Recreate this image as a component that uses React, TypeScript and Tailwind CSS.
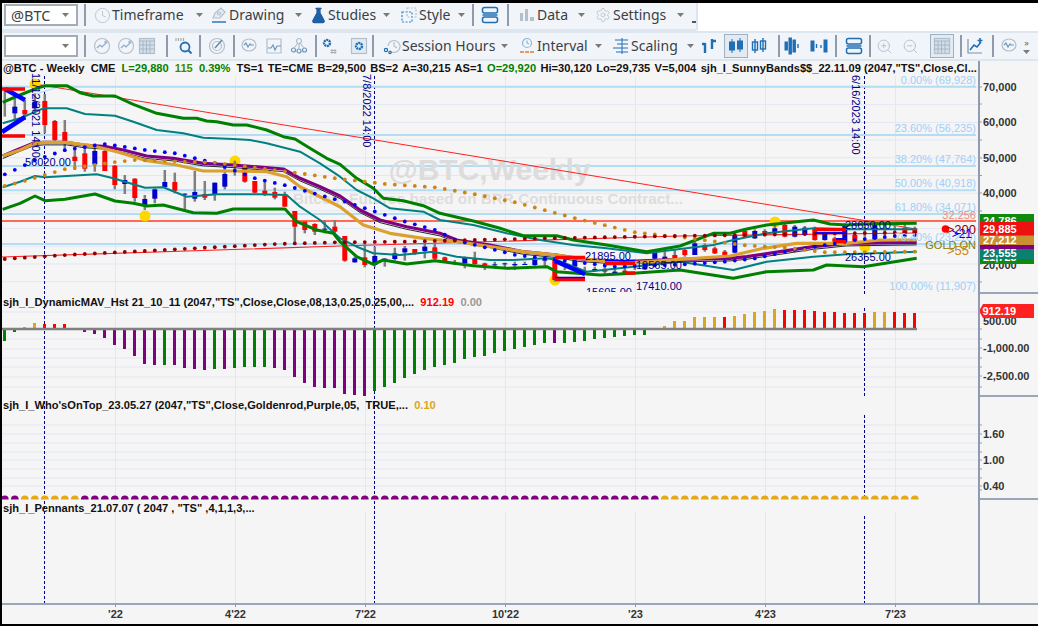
import type { ReactNode } from 'react'
import { Clock, FlaskConical, Settings, ZoomIn, ZoomOut } from 'lucide-react'

// toolbar bits
const GRAY = '#b3bfcb'
const BLUE = '#1f6fb5'

function Caret() {
  return (
    <svg width="7" height="4" viewBox="0 0 7 4" className="shrink-0">
      <path d="M0 0h7L3.5 4z" fill="#7b7b7b" />
    </svg>
  )
}

function Sep({ className = '' }: { className?: string }) {
  return <div className={`w-[2px] h-[22px] bg-[#8f9bab] shrink-0 ${className}`} />
}

function Ico({ children, className = '' }: { children: ReactNode; className?: string }) {
  return (
    <svg width="18" height="18" viewBox="0 0 18 18" fill="none" stroke={GRAY} strokeWidth="1.2" className={`shrink-0 ${className}`}>
      {children}
    </svg>
  )
}

function Menu({ w, icon, label, className = '' }: { w: string; icon: ReactNode; label: string; className?: string }) {
  return (
    <div className={`flex items-center shrink-0 ${w} ${className}`}>
      <span className="w-[20px] flex justify-center shrink-0">{icon}</span>
      <span className="text-[14px] text-[#3a3f45] leading-none">{label}</span>
      <span className="ml-auto"><Caret /></span>
    </div>
  )
}

function Combo({ text }: { text?: string }) {
  return (
    <div className="w-[74px] h-[22px] bg-white border-2 border-[#a4acb4] flex items-center shrink-0 pl-[5px] pr-[7px]">
      <span className="text-[14.5px] text-[#3a3f45] leading-none">{text}</span>
      <span className="ml-auto"><Caret /></span>
    </div>
  )
}

const StackIcon = () => (
  <Ico>
    <g stroke={BLUE} strokeWidth="1.5">
      <rect x="1.5" y="1.5" width="15" height="5.5" rx="2" />
      <rect x="1.5" y="11" width="15" height="5.5" rx="2" />
      <path d="M1.5 9h15" />
    </g>
  </Ico>
)

const DrawIcon = () => (
  <Ico>
    <path d="M3 12l2-5 6-5 4 4-5 6z" fill="#e6ebf1" />
    <circle cx="9" cy="7.5" r="1.5" />
    <path d="M2 16h14" stroke={BLUE} strokeWidth="1.4" />
  </Ico>
)

const StyleIcon = () => (
  <Ico>
    <rect x="2" y="6" width="10" height="10" stroke="#2f86c9" strokeDasharray="2 1.5" />
    <rect x="7" y="2" width="9" height="9" strokeDasharray="2 1.5" />
  </Ico>
)

const DataIcon = () => (
  <Ico>
    <g fill={GRAY} stroke="none">
      <rect x="2" y="7" width="3" height="8" />
      <rect x="7" y="3" width="3" height="12" />
      <rect x="12" y="11" width="4" height="4" />
    </g>
  </Ico>
)

const ChartCircle = () => (
  <Ico>
    <circle cx="9" cy="9" r="7.5" />
    <path d="M4 11l3-3 2 2 5-5" stroke="#8fabc6" />
    <circle cx="13" cy="5" r="1.2" fill="#8fabc6" />
  </Ico>
)

const GridIcon = () => (
  <Ico>
    <rect x="1.5" y="1.5" width="15" height="15" fill="#d3dee8" />
    <path d="M1.5 4h15M5 4v12.5M8.5 4v12.5M12 4v12.5M1.5 8h15M1.5 12h15" stroke="#9db0c1" strokeWidth="0.8" />
  </Ico>
)

const SearchDots = () => (
  <Ico>
    <path d="M1 1v3M3.5 1v3M6 1v3M8.5 1v3" stroke="#a8a8a8" />
    <circle cx="10" cy="10" r="4.5" stroke={BLUE} strokeWidth="1.8" />
    <path d="M13.5 13.5l3 3" stroke={BLUE} strokeWidth="2" />
  </Ico>
)

const TargetIcon = () => (
  <Ico>
    <circle cx="9" cy="9" r="7.5" />
    <circle cx="9" cy="9" r="4.5" />
    <path d="M7 11l7-8" stroke="#5c88b0" strokeWidth="1.5" />
  </Ico>
)

const WaveBubble = () => (
  <Ico>
    <ellipse cx="9" cy="8" rx="7" ry="6" />
    <path d="M4 8l2-2 2 4 2-3 1 1h3" stroke="#6f97bc" />
  </Ico>
)

const WaveBox = () => (
  <Ico>
    <path d="M2 16V2h14v14z" />
    <path d="M3 11h3l2-3 2 5 2-4h4" stroke="#6f97bc" />
  </Ico>
)

const NodesIcon = () => (
  <Ico>
    <circle cx="9" cy="4" r="2.5" />
    <circle cx="3.5" cy="13" r="2" stroke="#6f97bc" />
    <circle cx="9" cy="14" r="2" stroke="#6f97bc" />
    <circle cx="14.5" cy="13" r="2" stroke="#6f97bc" />
    <path d="M8 6l-4 5M9 6.5V12M10 6l4 5" />
  </Ico>
)

const GearHash = () => (
  <Ico>
    <circle cx="7" cy="6" r="3" stroke={BLUE} strokeWidth="2.4" strokeDasharray="2 0.6" />
    <path d="M12 12v5M15 12v5M10.5 13.5h6M10.5 15.5h6" stroke="#a8a8a8" strokeWidth="0.9" />
  </Ico>
)

const GearBox = () => (
  <Ico>
    <rect x="1.5" y="1.5" width="15" height="15" fill="#e3eaf1" />
    <circle cx="9" cy="9" r="3" stroke={BLUE} strokeWidth="2.4" strokeDasharray="2 0.6" />
  </Ico>
)

const SessionIcon = () => (
  <Ico>
    <path d="M5 9a6 6 0 1 1 2 5" />
    <path d="M11 5v4l3 2" />
    <circle cx="3" cy="13" r="1.6" stroke={BLUE} />
    <circle cx="7" cy="15.5" r="1.2" stroke={BLUE} />
  </Ico>
)

const IntervalIcon = () => (
  <Ico>
    <circle cx="9" cy="6" r="4.5" stroke="#8db5d6" />
    <path d="M9 3.5V6l2 1" stroke="#8db5d6" />
    <path d="M2 15h4M7 15h4M12 15h4" stroke="#e07b39" strokeWidth="1.5" />
  </Ico>
)

const ScalingIcon = () => (
  <Ico>
    <path d="M10 1v16M3 3h13M5 7h11M1 11h15M4 15h12" stroke={BLUE} strokeWidth="1" />
  </Ico>
)

const BarsUp = () => (
  <Ico>
    <g stroke={BLUE} strokeWidth="2.4">
      <path d="M5 6v10M2 7h3M12 2v10M12 4h4" />
    </g>
  </Ico>
)

const Candles = ({ hollow }: { hollow?: boolean }) => (
  <Ico>
    <g stroke={BLUE} fill={hollow ? 'none' : BLUE} strokeWidth={hollow ? 1.4 : 1}>
      <path d="M5 2v14M13 1v14" />
      <rect x="2.5" y="5" width="5" height="8" />
      <rect x="10.5" y="4" width="5" height="8" />
    </g>
  </Ico>
)

const Spread = ({ wide }: { wide?: boolean }) => (
  <Ico>
    <g stroke={BLUE} fill={BLUE} strokeWidth="1">
      {wide ? (
        <>
          <rect x="1" y="4" width="3" height="10" />
          <rect x="14" y="3" width="3" height="12" />
          <path d="M6.5 7v4M11 8v3" strokeWidth="1.4" />
        </>
      ) : (
        <>
          <rect x="2" y="5" width="2.4" height="8" />
          <rect x="6" y="1" width="2.4" height="16" />
          <rect x="10" y="3" width="2.4" height="12" />
          <path d="M15 7v4" strokeWidth="1.4" />
        </>
      )}
    </g>
  </Ico>
)

const AddChart = () => (
  <Ico>
    <path d="M2 2v14h14" stroke="#7f93a6" />
    <path d="M4 13l4-5 3 2 4-5" stroke={BLUE} strokeWidth="1.6" />
    <path d="M14 1v5M11.5 3.5h5" stroke={BLUE} strokeWidth="1.6" />
  </Ico>
)

// ---- chart data, taken from the picture (3x crop coords; one crop = 340px wide) ----
type P = [number, number]
const page = (pts: P[], off: number): P[] => pts.map(([x, y]) => [x / 3 + off, 70 + y / 3])
const series = (a: P[], b: P[], c: P[]): P[] => [...page(a, 0), ...page(b, 340), ...page(c, 680)]
const barX = (i: number) => 4.8 + 10 * i
const toPoints = (pts: P[]) => pts.map(([x, y]) => `${x.toFixed(1)},${y.toFixed(1)}`).join(' ')

const interp = (pts: P[], x: number) => {
  if (x <= pts[0][0]) return pts[0][1]
  for (let k = 1; k < pts.length; k++) {
    if (x <= pts[k][0]) {
      const [x0, y0] = pts[k - 1]
      const [x1, y1] = pts[k]
      return y0 + ((y1 - y0) * (x - x0)) / (x1 - x0)
    }
  }
  return pts[pts.length - 1][1]
}

const greenUp = series(
  [[8, 97], [60, 75], [110, 55], [135, 47], [200, 47], [240, 68], [280, 78], [345, 78], [400, 103], [470, 130], [550, 145], [590, 145], [620, 153], [650, 155], [700, 165], [740, 165], [800, 180], [850, 200], [885, 207], [930, 235], [980, 265]],
  [[0, 283], [50, 325], [100, 355], [130, 385], [190, 392], [250, 407], [300, 430], [400, 453], [480, 475], [550, 497], [650, 497], [700, 510], [800, 525], [920, 545]],
  [[0, 528], [100, 490], [150, 490], [200, 477], [260, 465], [350, 455], [400, 450], [450, 462], [500, 465], [550, 462], [710, 460]],
)
const tealUp = series(
  [[8, 160], [60, 145], [130, 115], [200, 115], [255, 132], [345, 137], [400, 155], [470, 180], [550, 190], [610, 203], [700, 207], [750, 210], [800, 220], [900, 245], [960, 280]],
  [[0, 320], [50, 360], [100, 385], [150, 415], [250, 425], [300, 450], [400, 465], [500, 490], [600, 510], [700, 525], [800, 535], [920, 550]],
  [[0, 537], [100, 525], [160, 510], [260, 490], [400, 475], [500, 478], [710, 478]],
)
const purple = series(
  [[8, 258], [50, 240], [100, 220], [130, 217], [200, 217], [250, 225], [320, 230], [370, 240], [440, 258], [520, 265], [610, 280], [700, 285], [850, 297], [900, 325], [960, 350]],
  [[0, 378], [60, 420], [120, 450], [200, 470], [300, 490], [350, 510], [450, 525], [550, 545], [650, 555], [720, 567], [850, 575]],
  [[0, 568], [150, 565], [200, 560], [300, 545], [400, 530], [500, 520], [710, 517]],
)
const gold = series(
  [[8, 258], [60, 240], [100, 222], [130, 217], [200, 217], [280, 228], [350, 245], [440, 272], [530, 285], [610, 303], [700, 303], [800, 305], [860, 320], [900, 350], [960, 380]],
  [[0, 410], [70, 465], [150, 490], [250, 505], [350, 515], [450, 530], [550, 545], [650, 555], [720, 565], [850, 580]],
  [[0, 568], [150, 558], [250, 535], [350, 520], [500, 520], [600, 510], [710, 510]],
)
const tealLow = series(
  [[8, 352], [60, 335], [105, 318], [135, 322], [200, 318], [290, 313], [340, 325], [435, 353], [490, 352], [560, 380], [650, 373], [780, 373], [860, 375], [900, 410], [960, 450]],
  [[0, 505], [50, 530], [100, 550], [180, 555], [280, 545], [350, 560], [450, 570], [520, 570], [620, 565], [650, 570], [740, 605], [880, 590]],
  [[0, 575], [160, 600], [260, 575], [400, 560], [500, 553], [710, 545]],
)
const greenLow = series(
  [[8, 418], [60, 400], [105, 378], [135, 392], [195, 388], [285, 372], [345, 393], [400, 400], [440, 408], [490, 405], [580, 428], [650, 430], [700, 417], [855, 417], [890, 455], [950, 480], [1000, 490]],
  [[0, 515], [50, 560], [100, 583], [130, 570], [200, 582], [285, 572], [400, 587], [500, 595], [620, 590], [650, 605], [780, 615], [880, 610]],
  [[0, 600], [160, 625], [260, 605], [400, 600], [440, 585], [550, 590], [710, 565]],
)

const blueDots = series(
  [[16, 313], [106, 270], [196, 240], [316, 222], [436, 240], [526, 250], [646, 280], [766, 325], [856, 346], [1006, 388]],
  [[16, 395], [106, 425], [196, 455], [286, 480], [346, 510], [526, 555], [616, 565], [826, 590]],
  [[16, 583], [136, 575], [226, 565], [316, 545], [526, 510], [646, 498], [706, 495]],
)
const orangeDots = series(
  [[16, 348], [76, 332], [196, 297], [346, 276], [406, 270], [646, 278], [886, 308], [1006, 325]],
  [[16, 328], [136, 342], [286, 352], [406, 373], [526, 397], [706, 445], [886, 487], [1006, 500]],
  [[16, 503], [196, 526], [316, 533], [436, 547], [706, 545]],
)
const redDots = series(
  [[16, 567], [196, 555], [526, 538], [826, 522], [1006, 517]],
  [[196, 515], [616, 505], [1006, 498]],
  [[706, 487]],
)

// wick top, wick bottom, body top, body bottom, colour
type C = [number, number, number, number, 'r' | 'b']
const candles: C[] = [
  [60, 140, 0, 0, 'b'], [80, 150, 110, 130, 'b'], [90, 150, 120, 133, 'r'], [70, 130, 95, 115, 'b'], [72, 190, 93, 165, 'r'],
  [150, 220, 153, 210, 'r'], [150, 245, 186, 215, 'r'], [230, 300, 260, 273, 'r'], [230, 305, 250, 296, 'r'], [220, 305, 243, 283, 'b'],
  [220, 303, 243, 303, 'r'], [285, 358, 287, 345, 'r'], [315, 372, 330, 342, 'b'], [325, 395, 326, 384, 'r'], [375, 420, 387, 405, 'b'],
  [355, 400, 358, 386, 'b'], [300, 355, 336, 351, 'b'], [308, 370, 336, 362, 'r'], [370, 425, 371, 374, 'b'], [303, 395, 366, 386, 'b'],
  [333, 390, 372, 383, 'r'], [338, 392, 338, 375, 'b'], [290, 358, 312, 350, 'b'], [272, 317, 0, 0, 'b'], [290, 338, 292, 335, 'r'],
  [333, 370, 333, 368, 'r'], [330, 378, 362, 375, 'r'], [353, 388, 366, 383, 'r'], [365, 410, 378, 410, 'r'], [423, 522, 423, 470, 'r'],
  [455, 490, 455, 480, 'r'], [460, 495, 462, 485, 'r'], [450, 490, 476, 478, 'b'], [450, 490, 470, 485, 'r'],
  [498, 575, 498, 572, 'r'], [560, 578, 565, 577, 'b'], [520, 592, 562, 585, 'r'], [530, 590, 558, 585, 'b'], [565, 590, 566, 570, 'b'],
  [533, 572, 550, 567, 'b'], [528, 572, 535, 547, 'b'], [537, 555, 537, 550, 'r'], [520, 565, 530, 543, 'b'], [520, 570, 532, 566, 'r'],
  [560, 575, 562, 573, 'r'], [570, 585, 0, 0, 'b'], [560, 595, 562, 580, 'b'], [545, 585, 567, 582, 'r'], [578, 600, 580, 586, 'r'],
  [575, 595, 583, 586, 'b'], [578, 592, 580, 583, 'b'], [575, 600, 582, 586, 'b'], [575, 585, 582, 585, 'b'], [565, 590, 570, 585, 'b'],
  [565, 590, 566, 572, 'b'], [565, 635, 565, 630, 'r'], [570, 600, 0, 0, 'b'], [568, 600, 572, 590, 'b'], [590, 610, 0, 0, 'b'],
  [590, 605, 597, 603, 'b'], [580, 610, 600, 605, 'r'], [595, 615, 605, 610, 'b'], [590, 610, 602, 612, 'r'], [590, 600, 0, 0, 'b'],
  [575, 600, 578, 598, 'b'], [548, 580, 548, 566, 'b'], [545, 585, 560, 575, 'b'], [540, 575, 555, 565, 'r'],
  [535, 560, 540, 555, 'r'], [515, 555, 520, 555, 'b'], [520, 545, 525, 540, 'r'], [530, 552, 535, 550, 'r'], [540, 560, 545, 558, 'r'],
  [490, 550, 497, 548, 'b'], [475, 502, 482, 500, 'r'], [478, 507, 483, 505, 'b'], [478, 497, 483, 495, 'r'], [460, 492, 475, 490, 'b'],
  [460, 502, 465, 500, 'r'], [465, 502, 470, 500, 'b'], [468, 497, 473, 495, 'b'], [470, 512, 475, 510, 'r'], [488, 512, 492, 510, 'b'],
  [500, 522, 505, 520, 'r'], [460, 522, 465, 520, 'b'], [490, 517, 495, 515, 'r'], [462, 517, 0, 0, 'b'], [460, 512, 465, 510, 'b'],
  [460, 502, 0, 0, 'b'], [458, 497, 0, 0, 'b'], [458, 492, 473, 490, 'r'], [470, 492, 475, 490, 'r'],
]

const G = '#008000', M = '#800080', Y = '#daa520', R = '#ff0000'
// histogram height, colour (index is bar number)
const hist: [number, string][] = [
  [-12, G], [-3, G], [2, Y], [6, Y], [5, R], [5, R], [5, R], [1, R], [-3, M], [-5, M], [-9, M], [-16, M], [-20, M], [-27, M], [-35, M], [-36, M],
  [-36, G], [-36, M], [-39, M], [-40, M], [-41, M], [-40, G], [-40, M], [-39, G], [-38, G], [-38, G], [-38, G], [-39, M], [-41, M], [-48, M],
  [-54, M], [-58, M], [-59, M], [-59, M], [-65, M], [-66, M], [-67, M], [-62, G], [-58, G], [-54, G], [-49, G], [-45, G], [-41, G], [-38, G],
  [-36, G], [-34, G], [-30, G], [-28, G], [-27, G], [-24, G], [-22, G], [-20, G], [-18, G], [-16, G], [-14, G], [-14, M], [-14, G], [-13, G],
  [-12, G], [-10, G], [-9, G], [-8, G], [-7, G], [-6, G], [-6, G], [-1, G], [3, Y], [8, Y], [8, Y], [12, Y], [12, Y], [12, Y], [12, R], [13, Y],
  [15, Y], [17, Y], [18, Y], [20, Y], [19, R], [19, R], [19, R], [18, R], [17, R], [17, R], [16, R], [16, R], [16, R], [17, Y], [17, Y], [17, R],
  [16, R], [16, R],
]

const HGRID = [
  ...Array.from({ length: 12 }, (_, i) => 87 + 17.7 * i),
  312, 329, 339, 349, 358, 367, 377, 387, 425, 434, 443, 452, 460, 469, 478, 486,
]
const VGRID = [115.5, 235.5, 365.5, 505.5, 635.5, 765.5, 895.5]
const FIB = [86.7, 135, 166, 190.3, 214, 244]
const AXIS_TICKS = [87, 104, 122, 140, 158, 175.5, 193, 211, 246, 264, 282, 312, 329, 339, 348, 358, 367, 376, 387, 425, 434, 443, 452, 460, 469, 478, 486, 490]

function Chart() {
  const t: React.SVGProps<SVGTextElement> = { fontFamily: '"Liberation Sans", Arial, sans-serif' }
  return (
    <svg width="1036" height="565" viewBox="2 61 1036 565" className="absolute left-0 top-0">
      <defs>
        <clipPath id="price"><rect x="2" y="70" width="976" height="222" /></clipPath>
        <clipPath id="halves"><rect x="2" y="480" width="976" height="19.5" /></clipPath>
      </defs>

      {HGRID.map(y => <line key={y} x1="2" x2="978" y1={y} y2={y} stroke="#e2e7f3" />)}
      {VGRID.map(x => (
        <g key={x} stroke="#e2e7f3">
          <line x1={x} x2={x} y1="76" y2="500" />
          <line x1={x} x2={x} y1="512" y2="607" />
        </g>
      ))}
      {[44.5, 374.5].map(x => <line key={x} x1={x} x2={x} y1="76" y2="603" stroke="#00008b" strokeDasharray="3 2" />)}
      {[[76, 294], [308, 397], [415, 499], [516, 603]].map(([a, b]) => (
        <line key={a} x1="864.5" x2="864.5" y1={a} y2={b} stroke="#00008b" strokeDasharray="3 2" />
      ))}

      <g clipPath="url(#price)">
        {FIB.map(y => <line key={y} x1="2" x2="976" y1={y} y2={y} stroke="#b5dcf5" strokeWidth="2" />)}
        <line x1="36" y1="94" x2="62" y2="86" stroke="#b5dcf5" />
        <text {...t} x="489.5" y="180" fontSize="30" fontWeight="700" fill="#dcdcdc" textAnchor="middle">@BTC,Weekly</text>
        <text {...t} x="488" y="204" fontSize="15.3" fontWeight="700" fill="#dddddd" textAnchor="middle">Bitcoin Futures based on BRR Continuous Contract...</text>
        <line x1="2" x2="976" y1="221" y2="221" stroke="#ff6a58" strokeWidth="2" />
        <polyline points="2,257 340,246 680,236 916,233" fill="none" stroke="#ff2020" strokeWidth="1.2" />
        <line x1="35" y1="84" x2="916" y2="229" stroke="#ff2020" strokeWidth="1" />

        {[[35, 84], [235, 161], [145, 216], [555, 280], [775, 222], [865, 247]].map(([x, y]) => (
          <circle key={x} cx={x} cy={y} r="5.5" fill="#ffd700" />
        ))}

        {candles.map((c, i) => (
          <g key={i}>
            <line x1={barX(i)} x2={barX(i)} y1={70 + c[0] / 3} y2={70 + c[1] / 3} stroke="#808080" strokeWidth="2.5" />
            {c[2] > 0 && (
              <rect x={barX(i) - 2.5} y={70 + c[2] / 3} width="5" height={Math.max(1, (c[3] - c[2]) / 3)} fill={c[4] === 'r' ? '#ff0000' : '#0000cd'} />
            )}
          </g>
        ))}

        <polyline points={toPoints(tealUp)} fill="none" stroke="#008080" strokeWidth="2" strokeLinejoin="round" />
        <polyline points={toPoints(tealLow)} fill="none" stroke="#008080" strokeWidth="2" strokeLinejoin="round" />
        <polyline points={toPoints(greenUp)} fill="none" stroke="#008000" strokeWidth="3" strokeLinejoin="round" />
        <polyline points={toPoints(greenLow)} fill="none" stroke="#008000" strokeWidth="3" strokeLinejoin="round" />
        <polyline points={toPoints(purple)} fill="none" stroke="#800080" strokeWidth="3.2" strokeLinejoin="round" />
        <polyline points={toPoints(purple.map(([x, y]) => [x, y + 2.6] as P))} fill="none" stroke="#111" strokeWidth="0.9" />
        <polyline points={toPoints(gold)} fill="none" stroke="#daa030" strokeWidth="3.2" strokeLinejoin="round" />

        {candles.map((_, i) => (
          <g key={i}>
            <circle cx={barX(i)} cy={interp(blueDots, barX(i))} r="1.9" fill="#0000ff" />
            <circle cx={barX(i)} cy={interp(orangeDots, barX(i))} r="1.9" fill="#cc8510" />
            <circle cx={barX(i)} cy={interp(redDots, barX(i))} r="1.9" fill="#8b0000" />
          </g>
        ))}

        {/* pennants */}
        <g>
          <path d="M5 89l20 11M2 132l23-15" stroke="#0000ff" strokeWidth="4.5" fill="none" />
          <path d="M2 89h23M2 136h23" stroke="#ff0000" strokeWidth="3.5" />
          <path d="M555 261l30 13" stroke="#0000ff" strokeWidth="4.5" />
          <path d="M555 257.5h30M555 279.5h30" stroke="#ff0000" strokeWidth="3.5" />
          <path d="M555 277.5h30" stroke="#0000ff" strokeWidth="1.5" />
          <path d="M605 263.5h30M625 273h10" stroke="#ff0000" strokeWidth="3.5" />
          <path d="M605 260.5h30" stroke="#0000ff" strokeWidth="1.5" />
          <path d="M815 229.5h31M836 241.5h10" stroke="#ff0000" strokeWidth="3.5" />
          <path d="M815 233h31M836 239h10" stroke="#0000ff" strokeWidth="1.8" />
        </g>

        <g fill="#00008b" fontSize="11">
          <text {...t} x="25" y="166">56020.00</text>
          <text {...t} x="585" y="260">21895.00</text>
          <text {...t} x="636" y="269">19565.00</text>
          <text {...t} x="636" y="290">17410.00</text>
          <text {...t} x="586" y="295.5">15605.00</text>
          <text {...t} x="845" y="229">28650.00</text>
          <text {...t} x="845" y="261">26355.00</text>
          <text {...t} transform="translate(32 73) rotate(90)">11/12/2021 14:00</text>
          <text {...t} transform="translate(363 74) rotate(90)">7/8/2022 14:00</text>
          <text {...t} transform="translate(852 75) rotate(90)">6/16/2023 14:00</text>
        </g>

        <g fontSize="11" textAnchor="end" fill="#9fd0f7">
          <text {...t} x="976" y="84">0.00% (69,928)</text>
          <text {...t} x="976" y="132">23.60% (56,235)</text>
          <text {...t} x="976" y="163">38.20% (47,764)</text>
          <text {...t} x="976" y="187">50.00% (40,918)</text>
          <text {...t} x="976" y="211">61.80% (34,071)</text>
          <text {...t} x="976" y="241">76.40% (23,210)</text>
          <text {...t} x="976" y="290">100.00% (11,907)</text>
          <text {...t} x="976" y="219" fill="#f28b7c">32,256</text>
          <circle cx="945.5" cy="229" r="3.8" fill="#ff0000" />
          <text {...t} x="976" y="234" fill="#8b0000" fontSize="13">&gt;200</text>
          <text {...t} x="972" y="238" fill="#0000ff" fontSize="12">&gt;21</text>
          <text {...t} x="976" y="249" fill="#808000">GOLD ON</text>
          <text {...t} x="969" y="255" fill="#cc8510" fontSize="13">&gt;55</text>
        </g>
      </g>

      {/* histogram */}
      {hist.map(([h, c], i) => (
        <rect key={i} x={3 + 10 * i} y={h > 0 ? 329 - h : 329} width="3" height={Math.abs(h)} fill={c} />
      ))}
      <line x1="2" x2="917" y1="329" y2="329" stroke="#808080" strokeWidth="2.6" />

      {/* who's on top dots */}
      <g clipPath="url(#halves)">
        {hist.map((_, i) => (
          <circle key={i} cx={4.8 + 10 * i} cy="499.3" r="3.9" fill={(i >= 2 && i <= 7) || i >= 66 ? '#e6a817' : '#800080'} />
        ))}
      </g>

      {/* right axis */}
      {AXIS_TICKS.map(y => <line key={y} x1="978" x2="982" y1={y} y2={y} stroke="#8f9bb3" />)}
      <g fontSize="11" fontWeight="700" fill="#333">
        <text {...t} x="983" y="91">70,000</text>
        <text {...t} x="983" y="126">60,000</text>
        <text {...t} x="983" y="162">50,000</text>
        <text {...t} x="983" y="197">40,000</text>
        <text {...t} x="983" y="269">20,000</text>
        <text {...t} x="983" y="325">500.00</text>
        <text {...t} x="983" y="352">-1,000.00</text>
        <text {...t} x="983" y="380">-2,500.00</text>
        <text {...t} x="983" y="438">1.60</text>
        <text {...t} x="983" y="464">1.00</text>
        <text {...t} x="983" y="490">0.40</text>
      </g>

      {/* price flags */}
      <g fontSize="11" fontWeight="700" fill="#fff">
        <rect x="979" y="214" width="55" height="8" fill="#0f8a0f" />
        <text {...t} x="983" y="225">24,786</text>
        <rect x="979" y="257" width="55" height="7" fill="#0f8a0f" />
        <text {...t} x="983" y="261">21,723</text>
        <rect x="979" y="249" width="55" height="10" fill="#0a8070" />
        <text {...t} x="983" y="256.5">23,555</text>
        <rect x="979" y="235" width="55" height="10" fill="#c89030" />
        <text {...t} x="983" y="243.5">27,212</text>
        <rect x="979" y="245" width="55" height="4" fill="#800080" />
        <path d="M979 222h55v13.5h-55z" fill="#ee1111" />
        <text {...t} x="983" y="233">29,885</text>
        <path d="M983 304h51v14h-51l-4-7z" fill="#ff2020" />
        <text {...t} x="982.5" y="315">912.19</text>
      </g>

      {/* time axis */}
      {VGRID.map(x => <line key={x} x1={x} x2={x} y1="603" y2="607" stroke="#8f9bb3" />)}
      <g fontSize="11" fontWeight="700" fill="#333" textAnchor="middle">
        {["'22", "4'22", "7'22", "10'22", "'23", "4'23", "7'23"].map((l, i) => (
          <text {...t} key={l} x={VGRID[i]} y="618">{l}</text>
        ))}
      </g>
    </svg>
  )
}

function Legend({ children, className = '' }: { children: ReactNode; className?: string }) {
  return (
    <div className={`relative z-10 h-[15px] w-[976px] overflow-hidden pl-[1px] flex items-center whitespace-pre text-[11.1px] font-bold leading-none text-[#111] ${className}`}>
      {children}
    </div>
  )
}

export default function App() {
  return (
    <div className="w-[1038px] h-[626px] bg-black pt-[3px] pl-[2px] pb-[2px] overflow-hidden flex flex-col font-['Noto_Sans','Liberation_Sans',sans-serif]">
      {/* top menu bar */}
      <div className="h-[28px] bg-white shrink-0">
        <div className="w-[696px] h-[28px] bg-[#f1f5fa] border-b-2 border-r-2 border-[#dde5ef] rounded-br-[3px] flex items-center pl-[2px] pb-[2px]">
          <Combo text="@BTC" />
          <Sep className="ml-[6px]" />
          <Menu w="w-[111px]" className="ml-[6px]" icon={<Clock size={17} color={GRAY} strokeWidth={1.2} />} label="Timeframe" />
          <Menu w="w-[93px]" className="ml-[6px]" icon={<DrawIcon />} label="Drawing" />
          <Menu w="w-[82px]" className="ml-[6px]" icon={<FlaskConical size={17} color="#1f5fa8" fill="#1f5fa8" />} label="Studies" />
          <Menu w="w-[66px]" className="ml-[9px]" icon={<StyleIcon />} label="Style" />
          <Sep className="ml-[7px]" />
          <span className="ml-[7px]"><StackIcon /></span>
          <Sep className="ml-[8px]" />
          <Menu w="w-[68px]" className="ml-[8px]" icon={<DataIcon />} label="Data" />
          <Menu w="w-[91px]" className="ml-[8px]" icon={<Settings size={16} color={GRAY} strokeWidth={1.2} />} label="Settings" />
          <span className="ml-[8px] mt-[14px] w-[5px] h-[2px] bg-[#555]" />
        </div>
      </div>

      {/* second tool bar */}
      <div className="h-[30px] bg-[#f1f5fa] border-y-2 border-[#dde5ef] shrink-0 flex items-center pl-[2px]">
        <Combo />
        <Sep className="ml-[6px]" />
        <span className="ml-[7px]"><ChartCircle /></span>
        <span className="ml-[6px]"><ChartCircle /></span>
        <span className="ml-[3px]"><GridIcon /></span>
        <Sep className="ml-[10px]" />
        <span className="ml-[7px]"><SearchDots /></span>
        <Sep className="ml-[6px]" />
        <span className="ml-[7px]"><TargetIcon /></span>
        <Sep className="ml-[7px]" />
        <span className="ml-[5px]"><WaveBubble /></span>
        <span className="ml-[7px]"><WaveBox /></span>
        <span className="ml-[7px]"><NodesIcon /></span>
        <Sep className="ml-[7px]" />
        <span className="ml-[3px]"><GearHash /></span>
        <span className="ml-[12px]"><GearBox /></span>
        <Sep className="ml-[4px]" />
        <Menu w="w-[126px]" className="ml-[8px]" icon={<SessionIcon />} label="Session Hours" />
        <Menu w="w-[85px]" className="ml-[9px]" icon={<IntervalIcon />} label="Interval" />
        <Menu w="w-[83px]" className="ml-[9px]" icon={<ScalingIcon />} label="Scaling" />
        <span className="ml-[6px]"><BarsUp /></span>
        <span className="ml-[6px] w-[24px] h-[24px] border border-[#9fb0c2] bg-[#e3eaf2] flex items-center justify-center shrink-0"><Candles /></span>
        <span className="ml-[2px]"><Candles hollow /></span>
        <Sep className="ml-[10px]" />
        <span className="ml-[3px]"><Spread /></span>
        <span className="ml-[9px]"><Spread wide /></span>
        <Sep className="ml-[7px]" />
        <span className="ml-[8px]"><StackIcon /></span>
        <Sep className="ml-[6px]" />
        <span className="ml-[5px]"><ZoomIn size={17} color={GRAY} strokeWidth={1.3} /></span>
        <span className="ml-[9px]"><ZoomOut size={17} color={GRAY} strokeWidth={1.3} /></span>
        <span className="ml-[11px] w-[24px] h-[24px] border border-[#9fb0c2] bg-[#e3eaf2] flex items-center justify-center shrink-0"><GridIcon /></span>
        <Sep className="ml-[6px]" />
        <span className="ml-[4px]"><AddChart /></span>
        <Sep className="ml-[8px]" />
        <span className="ml-[6px]"><WaveBubble /></span>
        <span className="ml-[5px] flex flex-col items-center gap-[3px] text-[9px] leading-none text-[#666]">
          <span>»</span>
          <Caret />
        </span>
      </div>

      {/* chart */}
      <div className="relative flex-1 min-h-0 bg-[#f5f5f5] flex flex-col font-['Liberation_Sans',Arial,sans-serif]">
        <Chart />
        <div className="h-[233px] shrink-0 flex flex-col">
          <Legend>
            <span>@BTC - Weekly  CME  </span>
            <span className="text-[#008000]">L=29,880  </span>
            <span className="text-[#3d8a00]">115  </span>
            <span className="text-[#008000]">0.39%  </span>
            <span className="[word-spacing:-0.9px]">TS=1  TE=CME  B=29,500  BS=2  A=30,215  AS=1  </span>
            <span className="text-[#008000] [word-spacing:-0.9px]">O=29,920  </span>
            <span className="[word-spacing:-0.9px]">Hi=30,120  Lo=29,735  V=5,004  </span>
            <span>sjh_I_SunnyBands$$_22.11.09 (2047,"TS",Close,Cl...</span>
          </Legend>
        </div>
        <div className="h-[103px] shrink-0 pt-[1px]">
          <Legend>
            <span>sjh_I_DynamicMAV_Hst 21_10_11 (2047,"TS",Close,Close,08,13,0.25,0.25,00,...  </span>
            <span className="text-[#ff0000]">912.19  </span>
            <span className="text-[#999]">0.00</span>
          </Legend>
        </div>
        <div className="h-[103px] shrink-0 pt-[1px]">
          <Legend>
            <span>sjh_I_Who'sOnTop_23.05.27 (2047,"TS",Close,Goldenrod,Purple,05,  TRUE,...  </span>
            <span className="text-[#daa520]">0.10</span>
          </Legend>
        </div>
        <div className="h-[103px] shrink-0 pt-[1px]">
          <Legend>
            <span>sjh_I_Pennants_21.07.07 ( 2047 , "TS" ,4,1,1,3,...</span>
          </Legend>
        </div>
        <div className="flex-1 border-t-2 border-[#9aa5b8]" />
        {/* axis rules */}
        <div className="absolute left-[976px] top-0 bottom-[21px] w-[60px] border-l-2 border-[#8f9bb3] flex flex-col">
          <div className="h-[233px] border-b-2 border-[#9aa5b8]" />
          <div className="h-[103px] border-b-2 border-[#9aa5b8]" />
          <div className="h-[103px] border-b-2 border-[#9aa5b8]" />
        </div>
      </div>
    </div>
  )
}
